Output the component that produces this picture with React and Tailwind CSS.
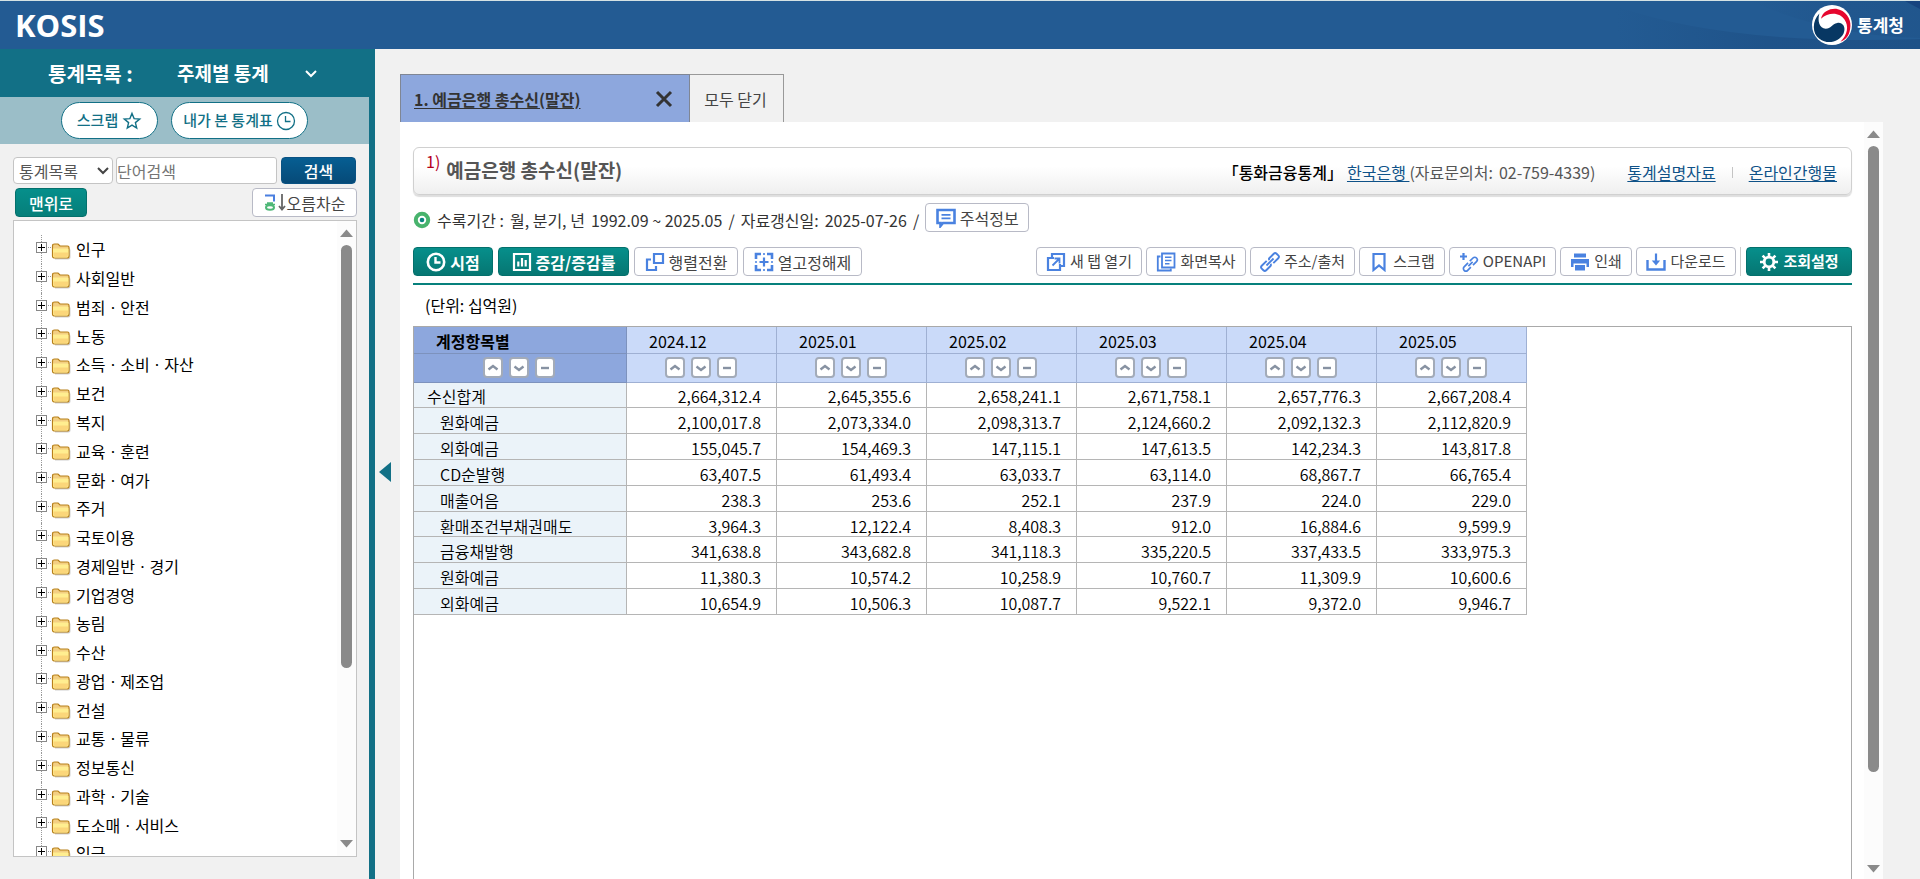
import { useState } from "react";

const categories = [
  "인구",
  "사회일반",
  "범죄ㆍ안전",
  "노동",
  "소득ㆍ소비ㆍ자산",
  "보건",
  "복지",
  "교육ㆍ훈련",
  "문화ㆍ여가",
  "주거",
  "국토이용",
  "경제일반ㆍ경기",
  "기업경영",
  "농림",
  "수산",
  "광업ㆍ제조업",
  "건설",
  "교통ㆍ물류",
  "정보통신",
  "과학ㆍ기술",
  "도소매ㆍ서비스",
  "임금",
];

const months = ["2024.12", "2025.01", "2025.02", "2025.03", "2025.04", "2025.05"];

const rows = [
  { name: "수신합계", values: ["2,664,312.4", "2,645,355.6", "2,658,241.1", "2,671,758.1", "2,657,776.3", "2,667,208.4"] },
  { name: "원화예금", values: ["2,100,017.8", "2,073,334.0", "2,098,313.7", "2,124,660.2", "2,092,132.3", "2,112,820.9"] },
  { name: "외화예금", values: ["155,045.7", "154,469.3", "147,115.1", "147,613.5", "142,234.3", "143,817.8"] },
  { name: "CD순발행", values: ["63,407.5", "61,493.4", "63,033.7", "63,114.0", "68,867.7", "66,765.4"] },
  { name: "매출어음", values: ["238.3", "253.6", "252.1", "237.9", "224.0", "229.0"] },
  { name: "환매조건부채권매도", values: ["3,964.3", "12,122.4", "8,408.3", "912.0", "16,884.6", "9,599.9"] },
  { name: "금융채발행", values: ["341,638.8", "343,682.8", "341,118.3", "335,220.5", "337,433.5", "333,975.3"] },
  { name: "원화예금", values: ["11,380.3", "10,574.2", "10,258.9", "10,760.7", "11,309.9", "10,600.6"] },
  { name: "외화예금", values: ["10,654.9", "10,506.3", "10,087.7", "9,522.1", "9,372.0", "9,946.7"] },
];

const Svg = ({ size = 20, children, className = "" }) => (
  <svg width={size} height={size} viewBox="0 0 20 20" fill="none" stroke="currentColor" strokeWidth="2.2" className={`shrink-0 ${className}`} aria-hidden="true">
    {children}
  </svg>
);

const ClockIcon = ({ thin }) => (
  <Svg>
    <circle cx="10" cy="10" r={thin ? 8.5 : 8.2} strokeWidth={thin ? 1.3 : 2.6} />
    <path d="M9.5 5v5.5h5" strokeWidth={thin ? 1.3 : 2.4} />
  </Svg>
);

const StarIcon = () => (
  <Svg>
    <path d="M10 2.4l2.1 5.2 5.6.4-4.3 3.6 1.3 5.5-4.7-3-4.7 3 1.3-5.5L2.300 8l5.600-.4z" strokeWidth="1.4" />
  </Svg>
);

const ChartIcon = () => (
  <Svg>
    <path d="M2 2h16v16H2z" />
    <path d="M6.3 9.5v5M10 6v8.5M13.7 8v6.5" />
  </Svg>
);

const PivotIcon = () => (
  <Svg>
    <path d="M9 2h9v9H9z" />
    <path d="M6 7.5H2V18h9v-4" />
  </Svg>
);

const UnfixIcon = () => (
  <Svg>
    <path d="M2 7V2h5M13 2h5v5M18 13v5h-5M7 18H2v-5" strokeWidth="2.6" />
    <path d="M10 5.5v9M5.5 10h9" />
    <path d="M10 1v2M10 17v2M1 10h2M17 10h2" strokeWidth="1.6" />
  </Svg>
);

const NoteIcon = () => (
  <Svg>
    <path d="M1.5 2h17v13H7l-2.5 3v-3h-3z" strokeWidth="2.6" />
    <path d="M5.5 6.8h9M5.5 10.3h9" strokeWidth="1.7" />
  </Svg>
);

const NewTabIcon = () => (
  <Svg>
    <path d="M6 5V2h12v12h-3" />
    <path d="M8 6H2v12h12v-6" />
    <path d="M6.5 13.5L13 7M8.5 6.5h5v5" strokeWidth="1.8" />
  </Svg>
);

const CopyIcon = () => (
  <Svg>
    <path d="M6 1.5h12.5v14H6z" strokeWidth="1.8" />
    <path d="M4.5 4.5H1.8v14h13v-2" strokeWidth="1.8" />
    <path d="M9 5.2h6.5M9 8.5h6.5M9 11.8h4.5" strokeWidth="1.5" />
  </Svg>
);

const LinkIcon = () => (
  <Svg>
    <g transform="rotate(-45 10 10)" strokeWidth="1.9">
      <path d="M8.5 6.8H1.5a2 2 0 0 0-2 2v2.4a2 2 0 0 0 2 2h6a1.5 1.5 0 0 0 1.5-1.5" />
      <path d="M11.5 13.2h7a2 2 0 0 0 2-2V8.8a2 2 0 0 0-2-2h-6A1.5 1.5 0 0 0 11 8.3" />
      <path d="M5 10h10" />
    </g>
  </Svg>
);

const BookmarkIcon = () => (
  <Svg>
    <path d="M4.5 2h11v16L10 13.5 4.5 18z" />
  </Svg>
);

const ApiIcon = () => (
  <Svg>
    <path d="M4.5 1v7M1 4.5h7" />
    <g transform="translate(1.5 2) rotate(-45 10 10)" strokeWidth="1.7">
      <path d="M9 7.5H3.5a2.5 2.5 0 0 0 0 5H8" />
      <path d="M11 12.5h5a2.5 2.5 0 0 0 0-5h-4.5" />
      <path d="M7 10h6" />
    </g>
  </Svg>
);

const PrinterIcon = () => (
  <Svg>
    <g fill="currentColor" stroke="none">
      <path d="M4 1.5h12v4H4z" />
      <path d="M1 7h18v8h-2.5v-3.5h-13V15H1z" />
      <path d="M5 13h10v5.5H5z" />
    </g>
  </Svg>
);

const DownloadIcon = () => (
  <Svg>
    <path d="M1.5 8v9.5h17V8" strokeWidth="2.4" />
    <path d="M10 1.5v9" />
    <path d="M5.8 8.5h8.4L10 13.5z" fill="currentColor" stroke="none" />
  </Svg>
);

const GearIcon = () => (
  <Svg>
    <circle cx="10" cy="10" r="4.8" strokeWidth="2.8" />
    <path d="M10 1v4M10 15v4M1 10h4M15 10h4M3.6 3.6l2.8 2.8M13.6 13.6l2.8 2.8M16.4 3.6l-2.8 2.8M6.4 13.6l-2.8 2.8" strokeWidth="2.6" />
  </Svg>
);

const TargetIcon = () => (
  <svg width="18" height="18" viewBox="0 0 18 18" className="shrink-0" aria-hidden="true">
    <circle cx="9" cy="9" r="6.2" fill="#fff" stroke="#48b36d" strokeWidth="4" />
    <circle cx="9" cy="9" r="2.3" fill="#0b8580" />
  </svg>
);

const SortIcon = () => (
  <svg width="22" height="20" viewBox="0 0 22 20" fill="none" className="shrink-0" aria-hidden="true">
    <path d="M1 2.5h9v6" stroke="#4a7fe0" strokeWidth="2" />
    <path d="M1 11.5h10M3 10h6" stroke="#4fb878" strokeWidth="1.5" />
    <ellipse cx="6" cy="14.5" rx="4" ry="2.2" stroke="#4fb878" strokeWidth="2" />
    <path d="M18 1v15M15 13l3 3.5 3-3.5" stroke="#666" strokeWidth="1.8" />
  </svg>
);

const FolderIcon = () => (
  <svg width="20" height="17" viewBox="0 0 20 17" className="shrink-0" aria-hidden="true">
    <path d="M3 5h14q2.500 0 2.500 2v7q0 2.500-2.500 2.500H4z" fill="#b0b0b0" opacity=".6" />
    <path d="M1.5 13V3q0-2 2-2H7l2 2h7.5q1.500 0 1.500 1.500V13q0 2-2 2h-12q-2.500 0-2.500-2z" fill="#f3cf83" stroke="#b8801a" strokeWidth="1.2" />
    <path d="M2 5.5h14.5q1 0 1 1V12q0 2.500-1.500 2.500H3.500Q2 14.500 2 12z" fill="#ffee90" />
    <path d="M2.5 9.5h14.5V12q0 2-1.500 2h-11q-2 0-2-2z" fill="#fbd67a" />
  </svg>
);

const KoreaLogo = () => (
  <svg width="40" height="40" viewBox="0 0 38 38" className="shrink-0" aria-hidden="true">
    <circle cx="19" cy="19" r="19" fill="#fff" />
    <path d="M8.5 13C10 6 17 3 23 3.5C32 5 37 13 36.5 20C36 28 33 33 27 35C34 28 35 20 31 14C27 7 16 6 8.5 13z" fill="#e6062e" />
    <path d="M7 8C0 15 0 27 7 32C15 38 26 35 30 27C33 20 28 16 24 17C19 18 18 22.5 13 22.5C7 22 5 15 7 8z" fill="#073763" />
  </svg>
);

const Arrow = ({ down }) => (
  <svg width="13" height="8" viewBox="0 0 13 8" className="shrink-0" aria-hidden="true">
    <path d={down ? "M0 0h13L6.5 7.5z" : "M0 8h13L6.5 .5z"} fill="#8a8a8a" />
  </svg>
);

// fake scrollbar, thumb size in % of the track
const Scrollbar = ({ thumb, className = "" }) => (
  <div className={`flex flex-col items-center shrink-0 bg-[#fcfcfc] ${className}`}>
    <Arrow />
    <div className="flex-1 w-[11px] my-2">
      <div className="w-full rounded-full bg-[#8a8a8a]" style={{ height: `${thumb}%` }} />
    </div>
    <Arrow down />
  </div>
);

const ToolButton = ({ icon, label, primary, small, className = "" }) => (
  <button
    type="button"
    className={`flex items-center justify-center gap-1 h-[29px] rounded border whitespace-nowrap ${
      small ? "text-[15px]" : "text-base"
    } ${
      primary
        ? "border-[#04706c] bg-linear-to-b from-[#068f8b] to-[#067672] text-white font-bold"
        : "border-[#b8bac6] bg-white text-[#444]"
    } ${className}`}
  >
    <span className={`flex ${primary ? "text-white" : "text-[#4a82e0]"}`}>{icon}</span>
    {label}
  </button>
);

const SortButton = ({ label, d }) => (
  <button type="button" aria-label={label} className="flex items-center justify-center w-5 h-[21px] rounded-[4px] border-2 border-[#a3abb8] bg-white">
    <svg width="12" height="12" viewBox="0 0 12 12" fill="none" stroke="#8792a2" strokeWidth="2.4" aria-hidden="true">
      <path d={d} />
    </svg>
  </button>
);

const SortButtons = () => (
  <div className="flex justify-center gap-[6px]">
    <SortButton label="오름차순 정렬" d="M1.5 7.5L6 4l4.5 3.5" />
    <SortButton label="내림차순 정렬" d="M1.5 4.5L6 8l4.5-3.5" />
    <SortButton label="정렬 해제" d="M2 6h8" />
  </div>
);

const Header = () => (
  <header className="relative flex items-center justify-between h-[49px] shrink-0 pl-[15px] pr-4 border-t border-[#d5e2e4] bg-[#235b93] overflow-hidden">
    <svg className="absolute right-0 top-0 h-full w-[360px]" viewBox="0 0 360 48" preserveAspectRatio="none" aria-hidden="true">
      <defs>
        <linearGradient id="wave">
          <stop offset="0" stopColor="#1e5187" stopOpacity="0" />
          <stop offset=".5" stopColor="#1e5187" stopOpacity=".8" />
          <stop offset="1" stopColor="#1e5187" />
        </linearGradient>
      </defs>
      <path d="M55 5Q170 45 360 38V48H60z" fill="url(#wave)" />
      <path d="M190 0Q270 35 360 37V0z" fill="url(#wave)" opacity=".5" />
      <path d="M345 0l15 8V0z" fill="#17447f" />
    </svg>
    <h1 className="relative text-[31px] leading-none font-bold text-white font-['Open_Sans','Noto_Sans_CJK_KR',sans-serif]">KOSIS</h1>
    <div className="relative flex items-center gap-[5px]">
      <KoreaLogo />
      <span className="text-[17px] font-bold text-white">통계청</span>
    </div>
  </header>
);

const Sidebar = () => {
  const [word, setWord] = useState("");

  return (
    <aside className="flex flex-col w-[375px] shrink-0 border-r-[6px] border-[#127086]">
      <div className="flex items-center h-12 shrink-0 bg-[#127086] pl-12 pt-px text-xl font-bold text-white">
        <span className="w-[129px]">통계목록 :</span>
        <button type="button" className="flex items-center justify-between w-[140px] text-[19px]">
          주제별 통계
          <svg width="12" height="8" viewBox="0 0 12 8" fill="none" stroke="#fff" strokeWidth="2" aria-hidden="true">
            <path d="M1 1l5 5 5-5" />
          </svg>
        </button>
      </div>

      <div className="flex items-center justify-center gap-[13px] h-[47px] shrink-0 bg-[#9bbec8] text-[15px] font-medium text-[#127086]">
        <button type="button" className="flex items-center justify-center gap-1 w-[97px] h-[37px] rounded-full border border-[#127086] bg-white">
          스크랩
          <StarIcon />
        </button>
        <button type="button" className="flex items-center justify-center gap-[3px] w-[137px] h-[37px] rounded-full border border-[#127086] bg-white">
          내가 본 통계표
          <ClockIcon thin />
        </button>
      </div>

      <div className="flex flex-col flex-1 min-h-0 pl-[13px] pr-3 pt-[13px] pb-[22px]">
        <form className="flex h-[27px] shrink-0 pr-px" onSubmit={(e) => e.preventDefault()}>
          <div className="relative w-[100px] mr-[3px]">
            <select aria-label="검색 구분" className="w-full h-full appearance-none rounded border border-[#c4c4c4] bg-white pl-[5px] text-base leading-[24px] text-[#555]">
              <option>통계목록</option>
            </select>
            <svg className="absolute right-1 top-[10px] pointer-events-none" width="12" height="8" viewBox="0 0 12 8" fill="none" stroke="#444" strokeWidth="2" aria-hidden="true">
              <path d="M1 1l5 5 5-5" />
            </svg>
          </div>
          <input
            aria-label="단어검색"
            placeholder="단어검색"
            value={word}
            onChange={(e) => setWord(e.target.value)}
            className="flex-1 min-w-0 rounded-[3px] border border-[#c4c4c4] bg-white text-base placeholder-[#757575]"
          />
          <button type="submit" className="w-[75px] ml-1 rounded border border-[#0a5283] bg-linear-to-b from-[#065e92] to-[#064a78] text-base leading-none font-medium text-white">
            검색
          </button>
        </form>

        <div className="flex justify-between mt-1 mb-[3px] pl-[2px] shrink-0">
          <button type="button" className="w-[72px] h-[29px] rounded border border-[#04706c] bg-linear-to-b from-[#068f8b] to-[#067f7a] text-base leading-none font-medium text-white">
            맨위로
          </button>
          <button type="button" className="flex items-center justify-center gap-px w-[105px] h-[29px] rounded border border-[#b8bac6] bg-white text-base text-[#444]">
            <SortIcon />
            오름차순
          </button>
        </div>

        {/* Tree */}
        <div className="flex flex-1 min-h-0 border border-[#c4c4c4] bg-white overflow-hidden">
          <ul className="flex flex-col flex-1 h-[633px] mt-[14px] pl-[22px] text-base text-black">
            {categories.map((name) => (
              <li key={name} className="flex flex-1">
                <div className="relative flex justify-center w-[11px] mr-px">
                  <span className="absolute inset-y-0 border-l border-dotted border-[#999]" />
                  <button type="button" aria-label={`${name} 펼치기`} className="relative mt-[7px] flex items-center justify-center w-[11px] h-[11px] border border-[#888] bg-white">
                    <svg width="7" height="7" viewBox="0 0 7 7" stroke="#000" aria-hidden="true">
                      <path d="M0 3.5h7M3.5 0v7" />
                    </svg>
                  </button>
                </div>
                <span className="w-[3px] h-[13px] border-b border-dotted border-[#999]" />
                <div className="flex items-start pt-2">
                  <FolderIcon />
                </div>
                <a href="#" className="self-center ml-[5px] leading-none">{name}</a>
              </li>
            ))}
          </ul>
          <Scrollbar thumb={72} className="w-[19px] py-2" />
        </div>
      </div>
    </aside>
  );
};

const DataTable = () => (
  <table className="w-[1113px] h-[288px] -ml-px table-fixed border-collapse text-base leading-5 text-black">
    <colgroup>
      <col className="w-[213px]" />
      {months.map((m) => (
        <col key={m} className="w-[150px]" />
      ))}
    </colgroup>
    <thead>
      <tr className="h-[26px]">
        <th className="border border-t-0 border-[#7d92bd] bg-[#8da7dd] pt-[2px] pb-0 pl-[22px] text-left font-bold">계정항목별</th>
        {months.map((m) => (
          <th key={m} className="border border-t-0 border-[#9fb0d3] bg-[#cadaf9] pt-[2px] pb-0 pl-[22px] text-left font-normal">{m}</th>
        ))}
      </tr>
      <tr className="h-[29px]">
        <td className="border border-[#7d92bd] bg-[#8da7dd] p-0 pr-[2px]">
          <SortButtons />
        </td>
        {months.map((m) => (
          <td key={m} className="border border-[#9fb0d3] bg-[#cadaf9] p-0 pr-[2px]">
            <SortButtons />
          </td>
        ))}
      </tr>
    </thead>
    <tbody>
      {rows.map((row, i) => (
        <tr key={i}>
          <th className={`border border-[#b5b5b5] bg-[#ebf3f9] pt-[3px] pb-0 text-left font-[350] ${i === 0 ? "pl-[13px]" : "pl-[26px]"}`}>{row.name}</th>
          {row.values.map((value, j) => (
            <td key={j} className="border border-[#b5b5b5] pt-[3px] pb-0 pr-[15px] text-right font-[350]">{value}</td>
          ))}
        </tr>
      ))}
    </tbody>
  </table>
);

const Content = () => (
  <div className="flex flex-1 min-h-0 bg-white">
    <section className="flex flex-col flex-1 min-w-0 pt-[25px] pl-[13px] pr-3">
      {/* Title */}
      <div className="flex items-center justify-between h-12 shrink-0 rounded-md border border-[#d0d0d0] bg-linear-to-b from-white from-40% to-[#efefef] pl-3 pr-[14px] shadow-[0_2px_1px_#dedede]">
        <div className="flex items-start gap-[6px] pb-2">
          <span className="text-base leading-[18px] text-[#b5001c]">1)</span>
          <h2 className="pt-[6px] text-[19px] leading-6 font-bold text-[#555]">예금은행 총수신(말잔)</h2>
        </div>
        <div className="flex items-center pt-[2px] text-base text-[#555]">
          <span className="font-medium text-black mr-1">「통화금융통계」</span>
          <a href="#" className="text-[#0f5288] underline underline-offset-2 whitespace-pre">한국은행 </a>
          <span className="mr-[6px]">(자료문의처:</span>
          <span>02-759-4339)</span>
          <a href="#" className="ml-8 text-[#0f5288] underline underline-offset-2">통계설명자료</a>
          <span className="w-px h-[11px] mx-4 bg-[#c4c4c4]" />
          <a href="#" className="text-[#0f5288] underline underline-offset-2">온라인간행물</a>
        </div>
      </div>

      {/* Period */}
      <div className="flex items-center mt-2 shrink-0 text-base text-[#333]">
        <div className="flex items-center gap-[6px] mr-[6px] pt-1">
          <TargetIcon />
          <span>수록기간 :</span>
          <span>월, 분기, 년</span>
          <span>1992.09 ~ 2025.05</span>
          <span>/</span>
          <span>자료갱신일:</span>
          <span>2025-07-26</span>
          <span>/</span>
        </div>
        <ToolButton icon={<NoteIcon />} label="주석정보" className="w-[104px]" />
      </div>

      {/* Toolbar */}
      <div className="flex justify-between mt-[15px] pb-[7px] shrink-0 border-b-2 border-[#06807c]">
        <div className="flex gap-[5px]">
          <ToolButton primary icon={<ClockIcon />} label="시점" className="w-20" />
          <ToolButton primary icon={<ChartIcon />} label="증감/증감률" className="w-[131px]" />
          <ToolButton icon={<PivotIcon />} label="행렬전환" className="w-[104px]" />
          <ToolButton icon={<UnfixIcon />} label="열고정해제" className="w-[119px]" />
        </div>
        <div className="flex gap-1">
          <ToolButton small icon={<NewTabIcon />} label="새 탭 열기" className="w-[106px]" />
          <ToolButton small icon={<CopyIcon />} label="화면복사" className="w-[100px]" />
          <ToolButton small icon={<LinkIcon />} label="주소/출처" className="w-[105px]" />
          <ToolButton small icon={<BookmarkIcon />} label="스크랩" className="w-[86px]" />
          <ToolButton small icon={<ApiIcon />} label="OPENAPI" className="w-[107px]" />
          <ToolButton small icon={<PrinterIcon />} label="인쇄" className="w-[72px]" />
          <ToolButton small icon={<DownloadIcon />} label="다운로드" className="w-[100px]" />
          <span className="w-px mr-px bg-[#ccc]" />
          <ToolButton small primary icon={<GearIcon />} label="조회설정" className="w-[106px]" />
        </div>
      </div>

      <p className="h-[41px] shrink-0 pl-3 text-base leading-[41px] text-black">(단위: 십억원)</p>

      <div className="flex-1 min-h-0 border border-b-0 border-[#a9a9a9] overflow-hidden">
        <DataTable />
      </div>
    </section>
    <Scrollbar thumb={88} className="w-[19px] pt-2 pb-[6px]" />
  </div>
);

const App = () => (
  <div className="flex flex-col h-screen overflow-hidden bg-[#f1f1f1] font-['Noto_Sans_CJK_KR',sans-serif]">
    <Header />
    <div className="flex flex-1 min-h-0">
      <Sidebar />
      <button type="button" aria-label="목록 접기" className="self-start mt-[413px] ml-1">
        <svg width="12" height="20" viewBox="0 0 12 20" aria-hidden="true">
          <path d="M12 0v20L0 10z" fill="#127086" />
        </svg>
      </button>
      <main className="flex flex-col flex-1 min-w-0 ml-[9px] mr-[37px] pt-[25px]">
        {/* Tabs */}
        <nav className="flex h-12 shrink-0">
          <div className="flex items-center justify-between w-[290px] border border-b-0 border-[#7f8694] bg-[#8da7dd] pl-[13px] pr-4">
            <a href="#" className="text-base font-bold text-[#333] underline underline-offset-2">1. 예금은행 총수신(말잔)</a>
            <button type="button" aria-label="탭 닫기">
              <svg width="18" height="18" viewBox="0 0 18 18" stroke="#333" strokeWidth="3" aria-hidden="true">
                <path d="M2 2l14 14M16 2L2 16" />
              </svg>
            </button>
          </div>
          <button type="button" className="w-[94px] border border-b-0 border-l-0 border-[#999] pr-[2px] text-base text-[#444]">모두 닫기</button>
        </nav>
        <Content />
      </main>
    </div>
  </div>
);

export default App;
